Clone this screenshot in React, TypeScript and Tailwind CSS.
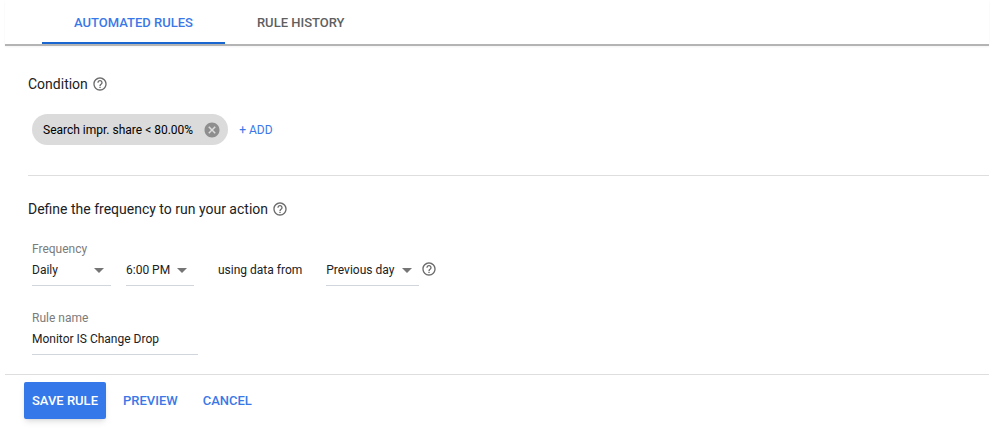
import React, { useState } from 'react';
import { MdArrowDropDown, MdCancel, MdHelpOutline } from 'react-icons/md';

interface SelectFieldProps {
  id: string;
  label: string;
  value: string;
  options: string[];
  showLabel?: boolean;
  className: string;
  onChange: (value: string) => void;
}

const SelectField: React.FC<SelectFieldProps> = ({ id, label, value, options, showLabel, className, onChange }) => (
  <div className={className}>
    {showLabel && (
      <label htmlFor={id} className="block leading-[14px] text-[#7b7b7b]">
        {label}
      </label>
    )}
    <div className="relative">
      <select
        id={id}
        aria-label={label}
        value={value}
        onChange={(e) => onChange(e.target.value)}
        className="block w-full h-[30px] pb-0.5 appearance-none border-b border-gray-300 bg-transparent outline-none"
      >
        {options.map((option) => (
          <option key={option}>{option}</option>
        ))}
      </select>
      <MdArrowDropDown className="pointer-events-none absolute right-0 top-0.5 w-6 h-6 text-[#757575]" />
    </div>
  </div>
);

const HelpButton: React.FC<{ label: string }> = ({ label }) => (
  <button type="button" aria-label={label} className="shrink-0 text-[#6b6b6b]">
    <MdHelpOutline className="w-4 h-4" />
  </button>
);

const tabs = ['AUTOMATED RULES', 'RULE HISTORY'];

const App: React.FC = () => {
  const [activeTab, setActiveTab] = useState(tabs[0]);
  const [conditions, setConditions] = useState(['Search impr. share < 80.00%']);
  const [frequency, setFrequency] = useState('Daily');
  const [time, setTime] = useState('6:00 PM');
  const [range, setRange] = useState('Previous day');
  const [name, setName] = useState('Monitor IS Change Drop');

  return (
    <div className="min-h-screen bg-white pl-[5px] pr-[11px] font-['Roboto',sans-serif] text-xs text-[#202124]">
      {/* Tabs */}
      <nav className="flex border-b-2 border-[#b4b4b4] pl-[37px] shadow-xs" aria-label="Tabs">
        {tabs.map((tab) => (
          <button
            key={tab}
            type="button"
            onClick={() => setActiveTab(tab)}
            className={`h-11 px-8 pt-1 border-b-2 text-[13px] font-medium ${
              activeTab === tab ? 'border-[#1a66d0] text-[#3b78e7]' : 'border-transparent text-[#5f5f5f]'
            }`}
          >
            {tab}
          </button>
        ))}
      </nav>

      <form onSubmit={(e) => e.preventDefault()}>
        {/* Condition */}
        <section className="ml-[23px] border-b border-[#dedede] pt-7 pb-[30px]">
          <div className="flex items-center gap-1">
            <h2 className="text-sm">Condition</h2>
            <HelpButton label="About conditions" />
          </div>
          <div className="mt-5 ml-1 flex items-center gap-[11px]">
            {conditions.map((condition) => (
              <span key={condition} className="flex h-[31px] items-center gap-2.5 rounded-full bg-[#dbdbdb] pl-[11px] pr-[7px] text-black">
                {condition}
                <button
                  type="button"
                  aria-label="Remove condition"
                  onClick={() => setConditions(conditions.filter((c) => c !== condition))}
                  className="text-[#8e8e8e]"
                >
                  <MdCancel className="w-[18px] h-[18px]" />
                </button>
              </span>
            ))}
            <button type="button" className="h-[31px] text-[#3b78e7]">+ ADD</button>
          </div>
        </section>

        {/* Frequency and name */}
        <section className="ml-[23px] pt-[23px] pb-[19px]">
          <div className="flex items-center gap-1">
            <h2 className="text-sm">Define the frequency to run your action</h2>
            <HelpButton label="About frequency" />
          </div>
          <div className="mt-[23px] ml-1 flex items-end">
            <SelectField
              id="frequency"
              label="Frequency"
              showLabel
              value={frequency}
              options={['Once', 'Daily', 'Weekly', 'Monthly']}
              className="w-[79px]"
              onChange={setFrequency}
            />
            <SelectField
              id="time"
              label="Time"
              value={time}
              options={['6:00 AM', '12:00 PM', '6:00 PM']}
              className="ml-[15px] w-[68px]"
              onChange={setTime}
            />
            <span className="mx-6 h-[30px] leading-7">using data from</span>
            <SelectField
              id="range"
              label="Data range"
              value={range}
              options={['Same day', 'Previous day', 'Last 7 days']}
              className="w-[93px]"
              onChange={setRange}
            />
            <div className="ml-0.5 flex h-[30px] items-center pb-1">
              <HelpButton label="About data ranges" />
            </div>
          </div>
          <div className="mt-[25px] ml-1 w-[166px]">
            <label htmlFor="rule-name" className="block leading-[14px] text-[#7b7b7b]">Rule name</label>
            <input
              id="rule-name"
              type="text"
              value={name}
              onChange={(e) => setName(e.target.value)}
              className="block w-full h-[30px] pb-0.5 border-b border-gray-300 outline-none"
            />
          </div>
        </section>

        {/* Actions */}
        <div className="flex items-center border-t border-[#dedede] pt-[7px] pl-[19px] text-[13px] font-medium text-[#3b78e7]">
          <button type="submit" className="h-[37px] rounded-xs bg-[#3578ea] px-2 text-white shadow-md">SAVE RULE</button>
          <button type="button" className="ml-[9px] h-[37px] px-2">PREVIEW</button>
          <button type="button" className="ml-[9px] h-[37px] px-2">CANCEL</button>
        </div>
      </form>
    </div>
  );
};

export default App;
